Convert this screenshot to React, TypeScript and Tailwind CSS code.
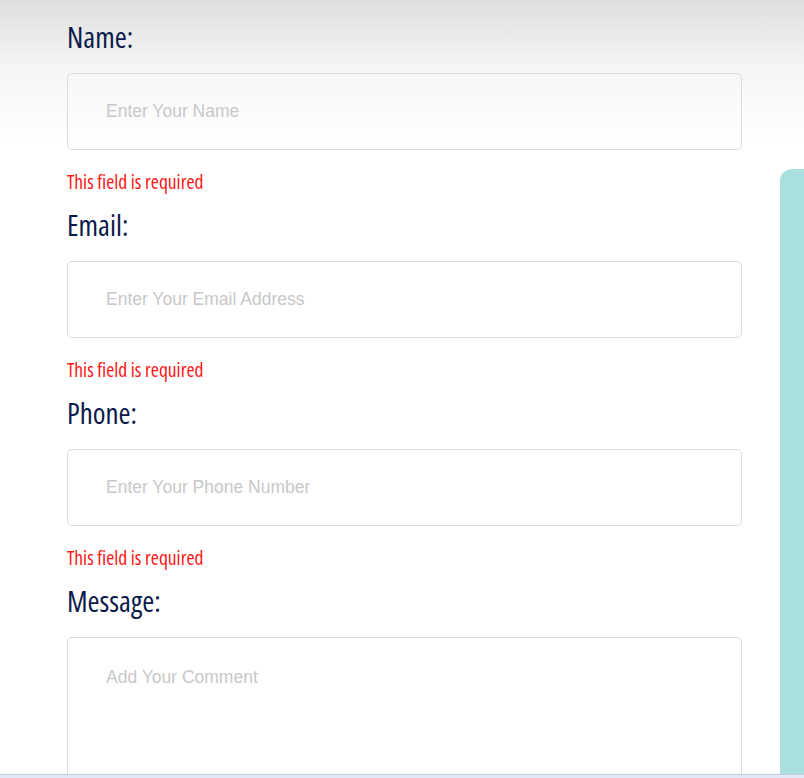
import React from "react";

const labelCls =
  "block text-[29px] leading-[34px] text-[#0b1a4b] font-['Open_Sans',sans-serif] font-stretch-[75%]";
const errCls =
  "mt-[20px] mb-[14px] text-[19.5px] leading-[24px] text-[#ff1515] font-['Open_Sans',sans-serif] font-stretch-[75%]";
const inputCls =
  "mt-[19px] block w-[675px] h-[77px] rounded-[5px] border border-[#dcdcdc] bg-transparent pl-[38px] text-[17.5px] text-[#333] placeholder:text-[#c8c8c8] outline-none font-[Arial,sans-serif]";

function Field({ label, placeholder }: { label: string; placeholder: string }) {
  return (
    <div>
      <label className={labelCls}>{label}</label>
      <input className={inputCls} placeholder={placeholder} />
      <div className={errCls}>This field is required</div>
    </div>
  );
}

export default function App() {
  return (
    <div className="h-[778px] w-[804px] flex flex-col overflow-hidden bg-white">
      <div className="flex-1 flex overflow-hidden bg-[linear-gradient(to_bottom,#dfdfdf_0px,#f6f6f6_70px,#ffffff_140px)]">
        <form className="ml-[67px] w-[675px] pt-[20px] shrink-0">
          <Field label="Name:" placeholder="Enter Your Name" />
          <Field label="Email:" placeholder="Enter Your Email Address" />
          <Field label="Phone:" placeholder="Enter Your Phone Number" />
          <div>
            <label className={labelCls}>Message:</label>
            <textarea
              className="mt-[19px] block w-[675px] h-[160px] resize-none rounded-[5px] border border-[#dcdcdc] bg-transparent pl-[38px] pt-[26px] text-[17.5px] text-[#333] placeholder:text-[#c8c8c8] outline-none font-[Arial,sans-serif]"
              placeholder="Add Your Comment"
            />
          </div>
        </form>
        <div className="ml-[38px] mt-[169px] flex-1 rounded-tl-[12px] bg-[#a9e0df]" />
      </div>
      <div className="h-[4px] shrink-0 border-t border-[#c5cbe0] bg-[#e3e8f6]" />
    </div>
  );
}
